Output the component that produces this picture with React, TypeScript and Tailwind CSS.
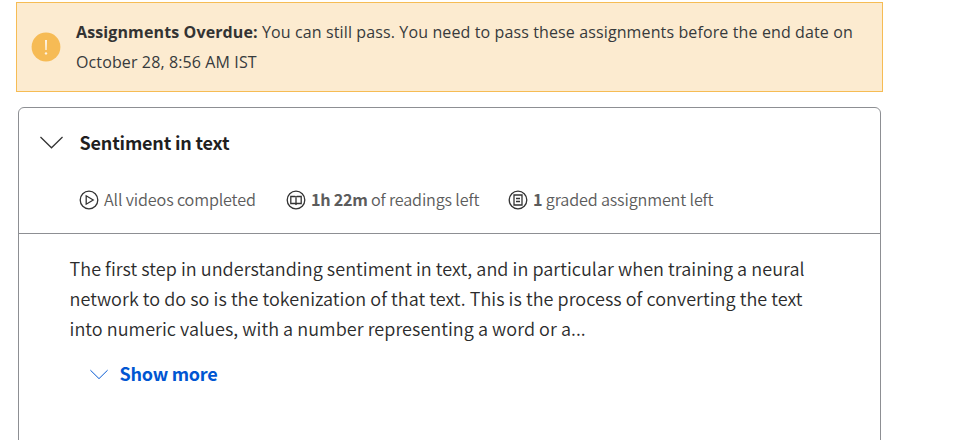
import type { ReactNode } from 'react';

function Chevron({ className }: { className: string }) {
  return (
    <svg viewBox="0 0 24 13" fill="none" stroke="currentColor" className={className}>
      <path d="M.5.7 12 12 23.5.7" strokeWidth="1.3" />
    </svg>
  );
}

function CircleIcon({ children }: { children: ReactNode }) {
  return (
    <svg viewBox="0 0 20 20" fill="none" stroke="#333" strokeWidth="1.3" className="h-5 w-5 shrink-0">
      <circle cx="10" cy="10" r="8.8" />
      {children}
    </svg>
  );
}

function Banner() {
  return (
    <div className="ml-4 flex h-[90px] w-[867px] items-center border border-[#f6bc54] bg-[#fcebd0] pl-[14px] text-[#373a3c]">
      <svg viewBox="0 0 30 30" className="h-[30px] w-[30px] shrink-0">
        <circle cx="15" cy="15" r="14.4" fill="#f6bb55" />
        <path d="M14 8h2l-.3 10h-1.4z" fill="#fdf3e3" />
        <circle cx="15" cy="21.4" r="1.2" fill="#fdf3e3" />
      </svg>
      <div className="ml-[15px] font-['Open_Sans',sans-serif] text-[16px] leading-[30px] tracking-[0.12px] whitespace-nowrap">
        <p>
          <b className="text-[#333]">Assignments Overdue:</b> You can still pass. You need to pass these assignments before the end date on
        </p>
        <p>October 28, 8:56 AM IST</p>
      </div>
    </div>
  );
}

export default function App() {
  return (
    <main className="h-[440px] w-[972px] overflow-hidden bg-white pt-[2px]">
      <Banner />
      <section className="mt-[15px] ml-[18px] h-[360px] w-[863px] rounded-md border border-[#8d8f93] font-['Noto_Sans_CJK_SC',sans-serif] whitespace-nowrap">
        <header className="h-[126px] border-b border-[#8d8f93] pt-[18px]">
          <div className="flex h-8 items-center pl-[21px]">
            <Chevron className="mt-px h-[13px] w-[23px] text-[#333]" />
            <h2 className="ml-[16.500px] text-[18px] leading-[30px] font-bold tracking-[-0.18px] text-[#1f1f1f]">Sentiment in text</h2>
          </div>
          <div className="mt-[27px] flex h-[30px] items-center pl-[60px] text-[16.200px] leading-[30px] font-[350] tracking-[-0.16px] text-[#5c5c5c]">
            <div className="flex w-[207px] items-center gap-[5px]">
              <CircleIcon>
                <path d="M7.2 5.8v8.4l7-4.2z" />
              </CircleIcon>
              <span className="-mt-[2px]">All videos completed</span>
            </div>
            <div className="flex w-[222px] items-center gap-[5px]">
              <CircleIcon>
                <path d="M4.800 6.500H9l1 .7 1-.7h4.200v7H11l-1 .8-1-.8H4.800zM10 7.200V14.300" />
              </CircleIcon>
              <span className="-mt-[2px]"><b className="tracking-[-0.3px]">1h 22m</b> of readings left</span>
            </div>
            <div className="flex items-center gap-[5px]">
              <CircleIcon>
                <path d="M6 5h8v10H6zM8 8.500h4M8 11.500h4" />
              </CircleIcon>
              <span className="-mt-[2px]"><b>1</b> graded assignment left</span>
            </div>
          </div>
        </header>
        <div className="pt-[19px] pl-[50.500px]">
          <div className="text-[18px] leading-[30px] font-[350] tracking-[0.05px] text-[#2b2b2b]">
            <p>The first step in understanding sentiment in text, and in particular when training a neural</p>
            <p>network to do so is the tokenization of that text. This is the process of converting the text</p>
            <p>into numeric values, with a number representing a word or a...</p>
          </div>
          <button className="mt-[15px] flex h-[30px] items-center pl-[20px] text-[#0056d2]">
            <Chevron className="mt-[2px] h-[11px] w-[18px]" />
            <span className="ml-[12px] text-[18px] leading-[30px] font-bold tracking-[-0.25px]">Show more</span>
          </button>
        </div>
      </section>
    </main>
  );
}
